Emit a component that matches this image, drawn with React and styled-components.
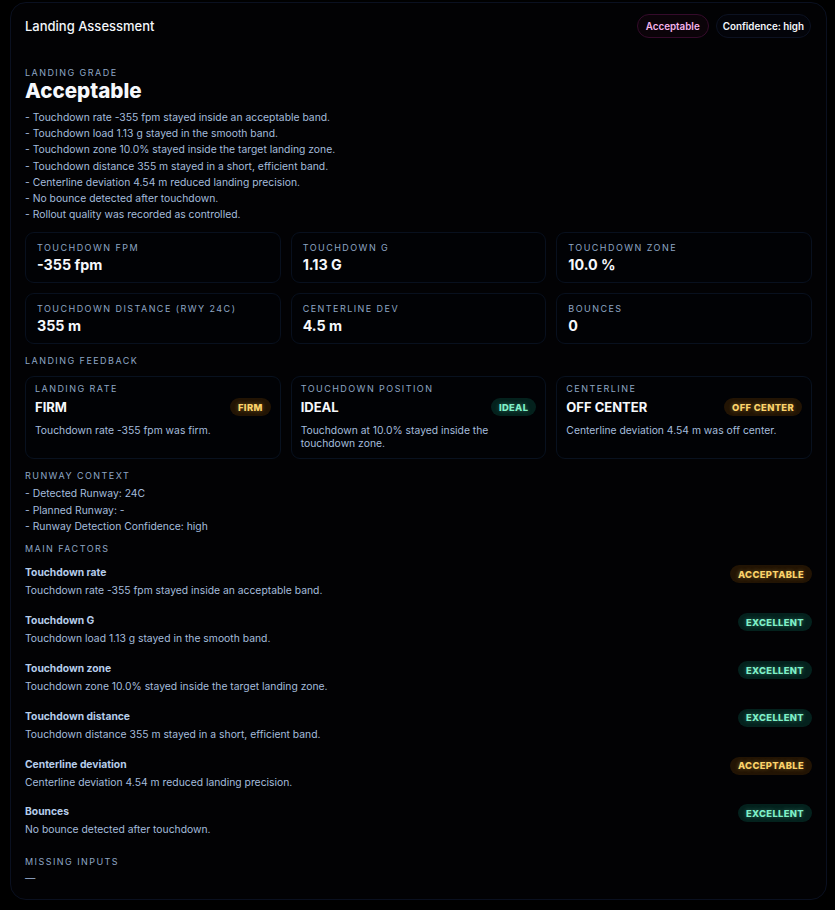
import React from "react";
import styled, { createGlobalStyle } from "styled-components";

const GlobalStyle = createGlobalStyle`
  html, body {
    margin: 0;
    padding: 0;
    background: #000;
  }
  body {
    font-family: Inter, "Noto Sans", "Liberation Sans", sans-serif;
    color: #a6bedc;
    -webkit-font-smoothing: antialiased;
  }
`;

const Page = styled.div`
  padding: 2px 8px 10px 10px;
`;

const Card = styled.section`
  background: #020204;
  border: 1px solid #0a1020;
  border-radius: 16px;
  padding: 11px 14px 13px 14px;
`;

const Header = styled.header`
  display: flex;
  align-items: center;
  justify-content: space-between;
  height: 24px;
`;

const Title = styled.h1`
  margin: 0;
  font-size: 13px;
  font-weight: 500;
  color: #f3f6fb;
`;

const HeaderBadges = styled.div`
  display: flex;
  gap: 7px;
  margin-right: 1px;
`;

const Pill = styled.span`
  display: inline-flex;
  align-items: center;
  height: 22px;
  padding: 0 ${(p) => (p.$tone === "pink" ? 8 : 6)}px;
  border-radius: 999px;
  font-size: 9.8px;
  font-weight: 600;
  color: ${(p) => (p.$tone === "pink" ? "#f6b3ec" : "#f3f6fb")};
  background: ${(p) => (p.$tone === "pink" ? "#0b0309" : "#03040a")};
  border: 1px solid ${(p) => (p.$tone === "pink" ? "#350b2b" : "#0c1222")};
`;

const Label = styled.div`
  font-size: 9px;
  line-height: 12px;
  letter-spacing: 1.45px;
  text-transform: uppercase;
  color: #8ea6c4;
  margin-top: ${(p) => p.$mt || 0}px;
`;

const Grade = styled.div`
  font-size: 20.6px;
  line-height: 24px;
  font-weight: 800;
  color: #f6f8fc;
`;

const Lines = styled.div`
  margin-top: ${(p) => p.$mt || 0}px;
  font-size: 10.35px;
  line-height: ${(p) => p.$lh || 16.2}px;
  color: #a4bcdc;
`;

const Grid = styled.div`
  display: grid;
  grid-template-columns: repeat(3, 1fr);
  gap: 10px;
  margin-top: ${(p) => p.$mt || 0}px;
`;

const Metric = styled.div`
  height: 51px;
  box-sizing: border-box;
  padding: 9px 11px 0;
  border: 1px solid #08101e;
  border-radius: 9px;
  background: #010205;
`;

const MetricValue = styled.div`
  margin-top: 2px;
  font-size: 14.3px;
  line-height: 18px;
  font-weight: 700;
  color: #f6f8fc;
`;

const Feedback = styled.div`
  padding: 6px 9px 8px;
  border: 1px solid #08111f;
  border-radius: 9px;
  background: #010205;
`;

const FeedbackRow = styled.div`
  display: flex;
  align-items: center;
  justify-content: space-between;
  height: 20px;
  margin-top: 2px;
`;

const FeedbackValue = styled.div`
  font-size: 13px;
  font-weight: 700;
  color: #f6f8fc;
`;

const FeedbackDesc = styled.div`
  margin-top: 7px;
  font-size: 10.35px;
  line-height: 13px;
  color: #a4bcdc;
`;

const tones = {
  amber: { color: "#fcd36a", bg: "#221404" },
  green: { color: "#7ff0c8", bg: "#04211d" },
};

const Tag = styled.span`
  display: inline-flex;
  align-items: center;
  height: 18px;
  padding: 0 8px;
  border-radius: 999px;
  font-size: 9.4px;
  font-weight: 800;
  letter-spacing: 0.35px;
  color: ${(p) => tones[p.$tone].color};
  background: ${(p) => tones[p.$tone].bg};
  text-shadow: 0 0 4px ${(p) => tones[p.$tone].color}66;
`;

const Factors = styled.div`
  display: flex;
  flex-direction: column;
  gap: 14.8px;
  margin-top: 10.5px;
`;

const Factor = styled.div`
  display: flex;
  justify-content: space-between;
  align-items: flex-start;
`;

const FactorTitle = styled.div`
  font-size: 10.3px;
  line-height: 14px;
  font-weight: 700;
  color: #b6cdeb;
`;

const FactorDesc = styled.div`
  margin-top: 3px;
  font-size: 10.35px;
  line-height: 16px;
  color: #a4bcdc;
`;

const bullets = [
  "Touchdown rate -355 fpm stayed inside an acceptable band.",
  "Touchdown load 1.13 g stayed in the smooth band.",
  "Touchdown zone 10.0% stayed inside the target landing zone.",
  "Touchdown distance 355 m stayed in a short, efficient band.",
  "Centerline deviation 4.54 m reduced landing precision.",
  "No bounce detected after touchdown.",
  "Rollout quality was recorded as controlled.",
];

const metrics = [
  ["Touchdown FPM", "-355 fpm"],
  ["Touchdown G", "1.13 G"],
  ["Touchdown Zone", "10.0 %"],
  ["Touchdown Distance (RWY 24C)", "355 m"],
  ["Centerline Dev", "4.5 m"],
  ["Bounces", "0"],
];

const feedback = [
  { label: "Landing Rate", value: "FIRM", tag: "FIRM", tone: "amber", desc: "Touchdown rate -355 fpm was firm." },
  { label: "Touchdown Position", value: "IDEAL", tag: "IDEAL", tone: "green", desc: "Touchdown at 10.0% stayed inside the touchdown zone." },
  { label: "Centerline", value: "OFF CENTER", tag: "OFF CENTER", tone: "amber", desc: "Centerline deviation 4.54 m was off center." },
];

const runway = ["Detected Runway: 24C", "Planned Runway: -", "Runway Detection Confidence: high"];

const factors = [
  { title: "Touchdown rate", desc: "Touchdown rate -355 fpm stayed inside an acceptable band.", tag: "ACCEPTABLE", tone: "amber" },
  { title: "Touchdown G", desc: "Touchdown load 1.13 g stayed in the smooth band.", tag: "EXCELLENT", tone: "green" },
  { title: "Touchdown zone", desc: "Touchdown zone 10.0% stayed inside the target landing zone.", tag: "EXCELLENT", tone: "green" },
  { title: "Touchdown distance", desc: "Touchdown distance 355 m stayed in a short, efficient band.", tag: "EXCELLENT", tone: "green" },
  { title: "Centerline deviation", desc: "Centerline deviation 4.54 m reduced landing precision.", tag: "ACCEPTABLE", tone: "amber" },
  { title: "Bounces", desc: "No bounce detected after touchdown.", tag: "EXCELLENT", tone: "green" },
];

export default function App() {
  return (
    <Page>
      <GlobalStyle />
      <Card>
        <Header>
          <Title>Landing Assessment</Title>
          <HeaderBadges>
            <Pill $tone="pink">Acceptable</Pill>
            <Pill>Confidence: high</Pill>
          </HeaderBadges>
        </Header>

        <Label $mt={29}>Landing Grade</Label>
        <Grade>Acceptable</Grade>
        <Lines $mt={6}>
          {bullets.map((b) => (
            <div key={b}>- {b}</div>
          ))}
        </Lines>

        <Grid $mt={10}>
          {metrics.map(([label, value]) => (
            <Metric key={label}>
              <Label>{label}</Label>
              <MetricValue>{value}</MetricValue>
            </Metric>
          ))}
        </Grid>

        <Label $mt={11}>Landing Feedback</Label>
        <Grid $mt={9}>
          {feedback.map((f) => (
            <Feedback key={f.label}>
              <Label>{f.label}</Label>
              <FeedbackRow>
                <FeedbackValue>{f.value}</FeedbackValue>
                <Tag $tone={f.tone}>{f.tag}</Tag>
              </FeedbackRow>
              <FeedbackDesc>{f.desc}</FeedbackDesc>
            </Feedback>
          ))}
        </Grid>

        <Label $mt={11}>Runway Context</Label>
        <Lines $mt={3} $lh={16.5}>
          {runway.map((r) => (
            <div key={r}>- {r}</div>
          ))}
        </Lines>

        <Label $mt={8}>Main Factors</Label>
        <Factors>
          {factors.map((f) => (
            <Factor key={f.title}>
              <div>
                <FactorTitle>{f.title}</FactorTitle>
                <FactorDesc>{f.desc}</FactorDesc>
              </div>
              <Tag $tone={f.tone}>{f.tag}</Tag>
            </Factor>
          ))}
        </Factors>

        <Label $mt={19}>Missing Inputs</Label>
        <Lines $mt={2} $lh={16}>
          —
        </Lines>
      </Card>
    </Page>
  );
}
